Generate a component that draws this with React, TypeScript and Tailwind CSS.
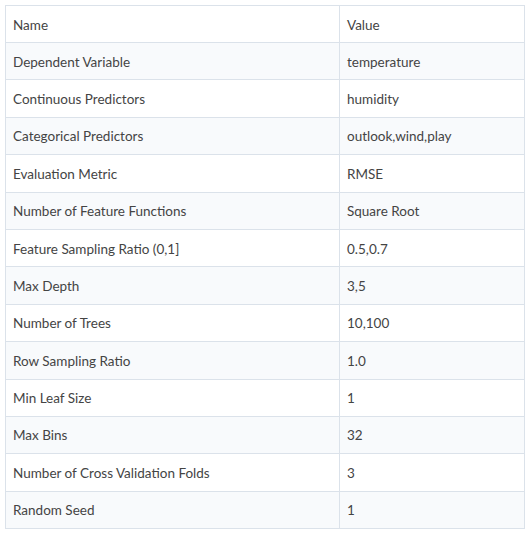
const ROWS: [string, string][] = [
  ['Dependent Variable', 'temperature'],
  ['Continuous Predictors', 'humidity'],
  ['Categorical Predictors', 'outlook,wind,play'],
  ['Evaluation Metric', 'RMSE'],
  ['Number of Feature Functions', 'Square Root'],
  ['Feature Sampling Ratio (0,1]', '0.5,0.7'],
  ['Max Depth', '3,5'],
  ['Number of Trees', '10,100'],
  ['Row Sampling Ratio', '1.0'],
  ['Min Leaf Size', '1'],
  ['Max Bins', '32'],
  ['Number of Cross Validation Folds', '3'],
  ['Random Seed', '1'],
];

export default function App() {
  return (
    <div className="bg-white w-[530px] h-[534px] pl-[5px] pt-[5px]" style={{ fontFamily: 'Lato, "Noto Sans", sans-serif' }}>
      <table className="w-[520px] border-collapse border border-[#dbe2ea] text-[13.5px] text-[#444]">
        <thead>
          <tr className="h-[37px] bg-white">
            <td className="pl-[7px] pt-[2px] border-r border-[#dbe2ea] w-[334px]">Name</td>
            <td className="pl-[7px] pt-[2px]">Value</td>
          </tr>
        </thead>
        <tbody>
          {ROWS.map(([n, v], i) => (
            <tr key={n} className={`h-[37.4px] border-t border-[#dbe2ea] ${i % 2 === 0 ? 'bg-[#f8fafc]' : 'bg-white'}`}>
              <td className="pl-[7px] pt-[1px] border-r border-[#dbe2ea]">{n}</td>
              <td className="pl-[7px] pt-[1px]">{v}</td>
            </tr>
          ))}
        </tbody>
      </table>
    </div>
  );
}
